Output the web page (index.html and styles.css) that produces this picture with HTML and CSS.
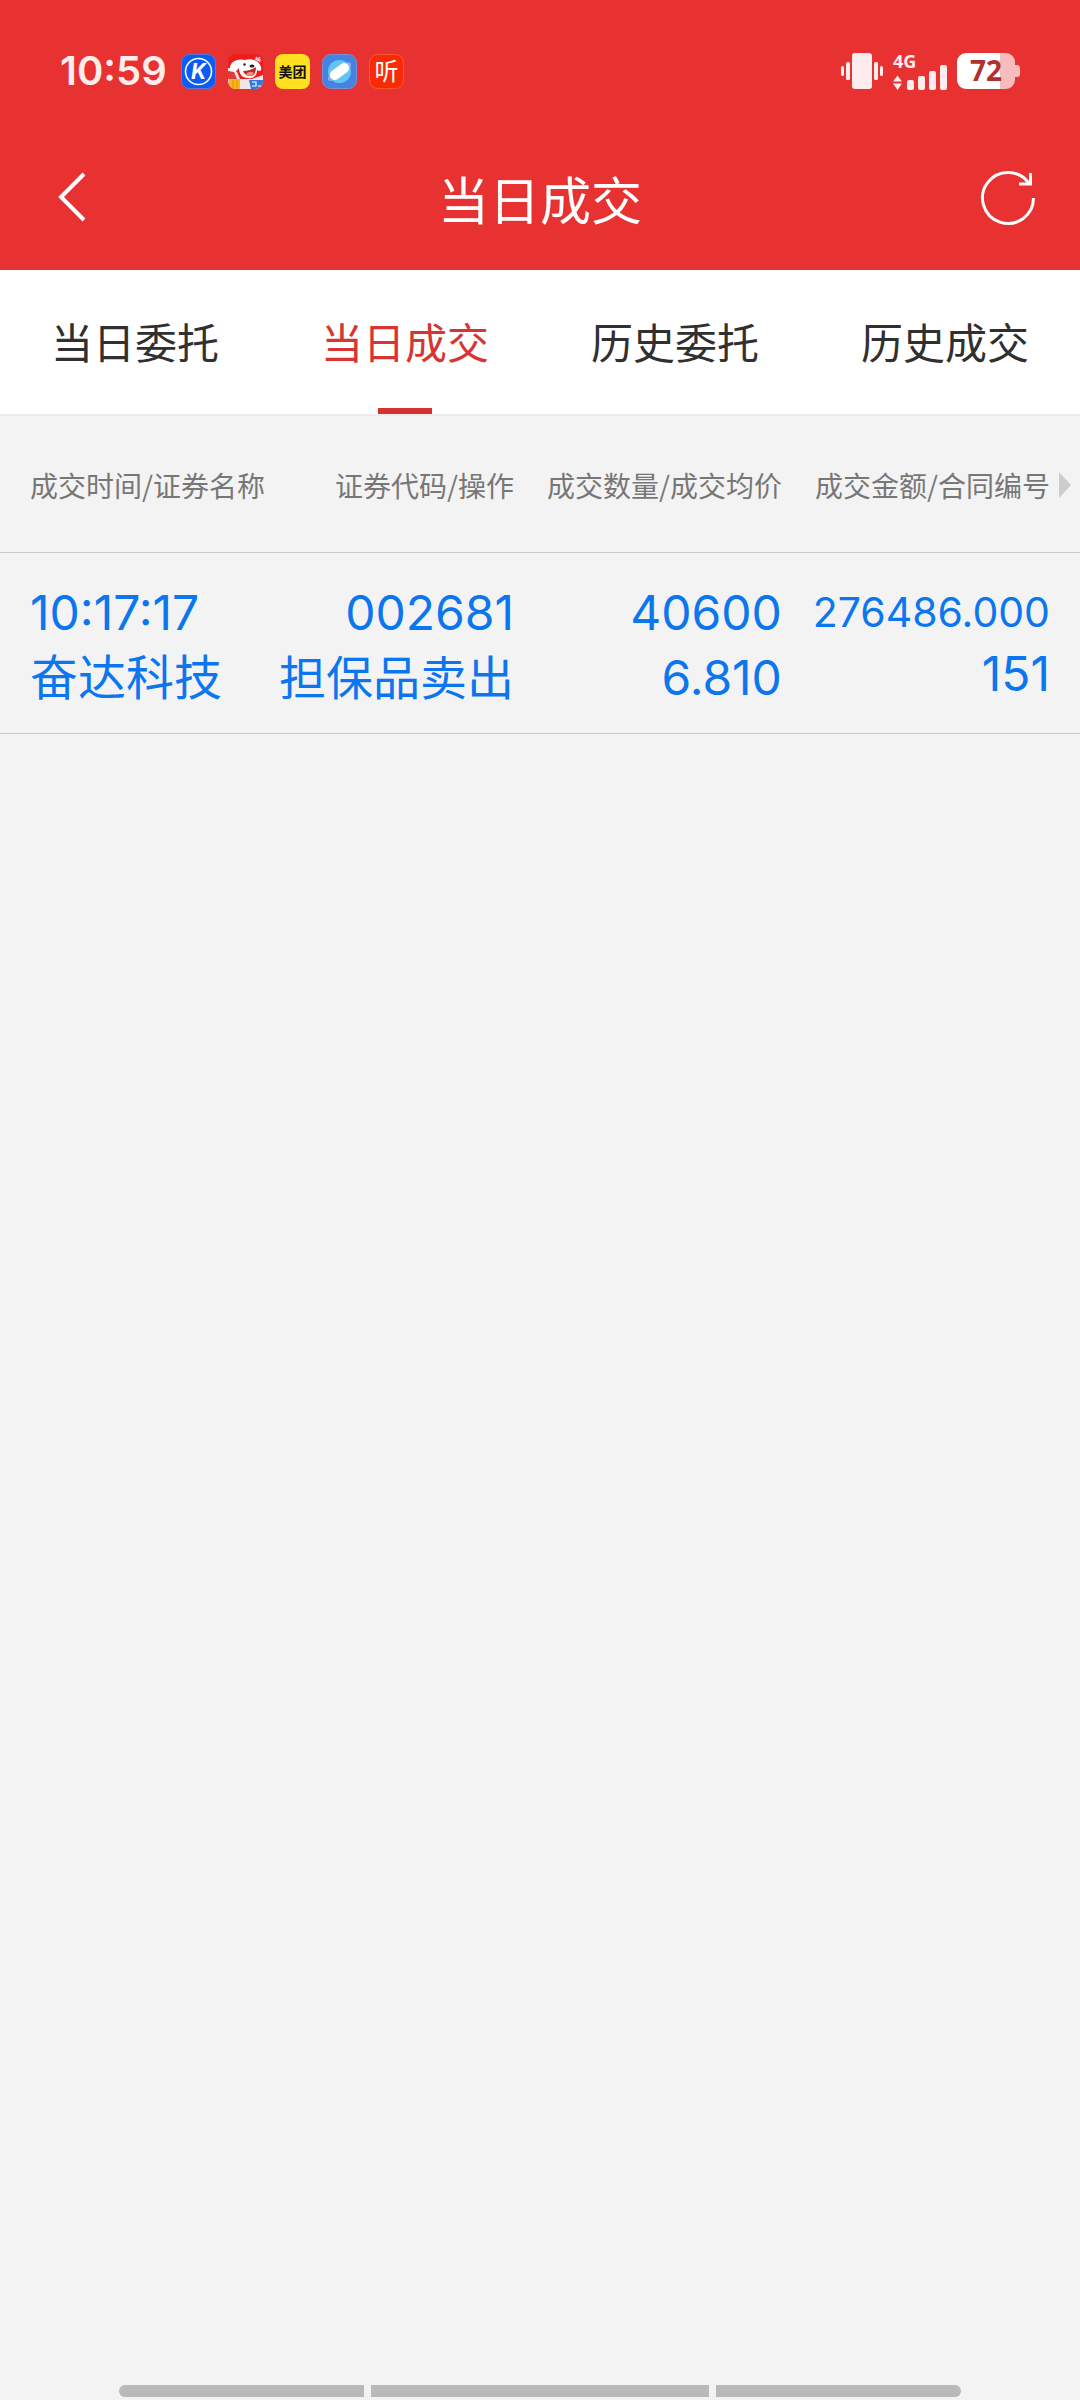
FILE: index.html
```html
<!DOCTYPE html>
<html lang="zh-CN">
<head>
<meta charset="utf-8">
<meta name="viewport" content="width=device-width, initial-scale=1">
<title>当日成交</title>
<link rel="stylesheet" href="styles.css">
</head>
<body>
<div class="app">
  <header class="top">
    <div class="status">
      <div class="status-side">
        <span class="clock">10:59</span>
        <div class="notices">
          <svg class="notice" viewBox="0 0 35 35" aria-hidden="true">
            <rect x=".5" y=".5" width="34" height="34" rx="8" fill="#0a5cf5" stroke="#5a78d8"/>
            <circle cx="17.500" cy="17.500" r="13" fill="none" stroke="#fff" stroke-width="1.600"/>
            <text class="glyph-k" x="17.500" y="25" text-anchor="middle">K</text>
          </svg>
          <svg class="notice" viewBox="0 0 35 35" aria-hidden="true">
            <clipPath id="tile"><rect width="35" height="35" rx="8"/></clipPath>
            <g clip-path="url(#tile)">
              <rect width="35" height="35" fill="#ee1c1c"/>
              <path d="M0 14Q5 14 9 18L12 25H24L35 21V35H0Z" fill="#f4e4e4"/>
              <path d="M0 17l6 1 3 7H0Z" fill="#e23a3a"/>
              <path d="M2 13C3 7 10 4 17 6C23 4 31 6 33 13C34 17 32 18 29 16C29 22 25 25 20 24C14 24 11 20 11 14C8 19 1 19 2 13Z" fill="#fff"/>
              <path d="M15 17Q22 17 28 13Q28 22 22 22Q17 22 15 17Z" fill="#c92222"/>
              <path d="M18 20Q22 16 26 19Q24 22 22 22Q19 22 18 20Z" fill="#f58a80"/>
              <ellipse cx="24" cy="12" rx="2.500" ry="1.500" fill="#222"/>
              <circle cx="16.500" cy="10.500" r="1.200" fill="#222"/>
              <path d="M28 3l4 5M32 3l-4 5M27 5l6 1" stroke="#e8c6d0" stroke-width="1.500"/>
              <path d="M1 25h11v10H1Z" fill="#fbb51c"/>
              <path d="M5 26v8M9 26v8" stroke="#e08f10"/>
              <path d="M21 26h14v9H23Z" fill="#2f78e0"/>
              <path d="M24 28h4v4h-4M30 32h4" stroke="#fff" stroke-width="1.200" fill="none"/>
            </g>
          </svg>
          <svg class="notice" viewBox="0 0 35 35" aria-hidden="true">
            <rect width="35" height="35" rx="8" fill="#ffe01e"/>
            <text class="glyph-mt" x="17.500" y="22.500" text-anchor="middle">美团</text>
          </svg>
          <svg class="notice" viewBox="0 0 35 35" aria-hidden="true">
            <rect x=".5" y=".5" width="34" height="34" rx="8" fill="#4583e0" stroke="#7b8fd4"/>
            <circle cx="17.500" cy="17.500" r="11.500" fill="#62c4f5"/>
            <ellipse cx="17.500" cy="17.500" rx="14" ry="5" fill="#86b0ee" transform="rotate(-37 17.500 17.500)"/>
            <rect x="6.500" y="12.500" width="22" height="10" rx="5" fill="#fff" transform="rotate(-37 17.500 17.500)"/>
          </svg>
          <svg class="notice" viewBox="0 0 35 35" aria-hidden="true">
            <rect x=".5" y=".5" width="34" height="34" rx="8" fill="#f92a06" stroke="#fb5a30"/>
            <text class="glyph-ting" x="17.500" y="26" text-anchor="middle">听</text>
          </svg>
        </div>
      </div>
      <div class="status-side">
        <svg class="vibrate" viewBox="0 0 42 36" aria-hidden="true">
          <g fill="#ffecec">
            <rect x="11" width="20" height="36" rx="3"/>
            <rect x="5" y="9" width="4" height="18" rx="1.500"/>
            <rect x="33" y="9" width="4" height="18" rx="1.500"/>
            <rect y="13" width="3" height="10" rx="1.500"/>
            <rect x="39" y="13" width="3" height="10" rx="1.500"/>
          </g>
        </svg>
        <svg class="signal" viewBox="0 0 54 36" aria-hidden="true">
          <g fill="#ffecec">
            <text class="glyph-net" x="0" y="15">4G</text>
            <path d="M4.500 22.500L9 28.500H0ZM4.500 37L0 30.500H9Z"/>
            <rect x="14" y="27" width="7" height="10" rx="2"/>
            <rect x="25" y="23" width="7" height="14" rx="2"/>
            <rect x="36" y="18" width="7" height="19" rx="2"/>
            <rect x="47" y="12" width="7" height="25" rx="2"/>
          </g>
        </svg>
        <svg class="battery" viewBox="0 0 63 36" aria-label="72">
          <path d="M43 0H49A9 9 0 0 1 58 9V12H60Q63 12 63 15V21Q63 24 60 24H58V27A9 9 0 0 1 49 36H43Z" fill="#f7bcbc"/>
          <path d="M9 0H43V36H9A9 9 0 0 1 0 27V9A9 9 0 0 1 9 0Z" fill="#fff"/>
          <text class="glyph-pct" x="29" y="28" text-anchor="middle">72</text>
        </svg>
      </div>
    </div>
    <div class="bar">
      <button class="icon-btn" type="button" aria-label="返回">
        <svg class="back" viewBox="0 0 30 52" aria-hidden="true"><path d="M27 2L4 25L27 48" fill="none" stroke="#fff" stroke-width="4"/></svg>
      </button>
      <h1 class="title">当日成交</h1>
      <button class="icon-btn refresh-btn" type="button" aria-label="刷新">
        <svg class="refresh" viewBox="0 0 56 56" aria-hidden="true"><g fill="none" stroke="#fff" stroke-width="3"><path d="M53.500 28A25.500 25.500 0 1 1 49 13.500"/><path d="M50.500 3V14H39"/></g></svg>
      </button>
    </div>
  </header>
  <nav class="tabs">
    <a class="tab" href="#">当日委托</a>
    <a class="tab tab-on" href="#" aria-current="page">当日成交</a>
    <a class="tab" href="#">历史委托</a>
    <a class="tab" href="#">历史成交</a>
  </nav>
  <main>
    <table class="deals">
      <thead>
        <tr>
          <th class="first">成交时间/证券名称</th>
          <th>证券代码/操作</th>
          <th>成交数量/成交均价</th>
          <th class="last">成交金额/合同编号<span class="more"></span></th>
        </tr>
      </thead>
      <tbody>
        <tr>
          <td class="first"><div>10:17:17</div><div>奋达科技</div></td>
          <td><div>002681</div><div class="name">担保品卖出</div></td>
          <td><div>40600</div><div>6.810</div></td>
          <td class="last"><div class="amount">276486.000</div><div>151</div></td>
        </tr>
      </tbody>
    </table>
  </main>
  <footer class="gesture"><span></span><span></span><span></span></footer>
</div>
</body>
</html>
```
FILE: styles.css
```css
* { box-sizing: border-box; }

body {
  margin: 0;
  background: #f3f3f3;
  font-family: Inter, "Noto Sans CJK SC", sans-serif;
}

.app {
  display: flex;
  flex-direction: column;
  min-height: 100vh;
}

/* Header */
.top {
  background: #e83131;
  color: #fff;
}

.status {
  display: flex;
  justify-content: space-between;
  align-items: center;
  height: 142px;
  padding: 0 60px;
}

.status-side {
  display: flex;
  align-items: center;
  gap: 10px;
}

.clock {
  width: 111px;
  font-size: 40px;
  line-height: 48px;
  font-weight: 600;
  color: #ffecec;
}

.notices {
  display: flex;
  gap: 12px;
}

.notice {
  width: 35px;
  height: 35px;
  overflow: visible;
}

.vibrate { width: 42px; height: 36px; }
.signal { width: 54px; height: 36px; overflow: visible; }
.battery { width: 63px; height: 36px; overflow: visible; }

.glyph-k { font: italic 700 21px Inter, sans-serif; fill: #fff; }
.glyph-mt { font: 700 14px "Noto Sans CJK SC", sans-serif; fill: #111; }
.glyph-ting { font: 400 24px "Noto Sans CJK SC", sans-serif; fill: #fff; }
.glyph-net { font: 700 18px "Open Sans", sans-serif; }
.glyph-pct { font: 700 28px "Open Sans", sans-serif; fill: #b03030; }

.bar {
  display: flex;
  justify-content: space-between;
  align-items: center;
  height: 128px;
  padding: 0 44px 16px 57px;
}

.icon-btn {
  display: flex;
  width: 70px;
  padding: 0;
  border: 0;
  background: none;
}

.refresh-btn {
  width: 83px;
  justify-content: flex-end;
}

.back { width: 30px; height: 52px; }
.refresh { width: 56px; height: 56px; }

.title {
  margin: 0;
  padding-top: 8px;
  font-size: 51px;
  line-height: 60px;
  font-weight: 400;
}

/* Tabs */
.tabs {
  display: grid;
  grid-template-columns: repeat(4, 1fr);
  background: #fff;
  border-bottom: 2px solid #ececec;
}

.tab {
  display: flex;
  flex-direction: column;
  align-items: center;
  height: 144px;
  padding-top: 44px;
  font-size: 42px;
  line-height: 60px;
  color: #303030;
  text-decoration: none;
}

.tab-on { color: #d83434; }

.tab-on::after {
  content: "";
  width: 54px;
  height: 6px;
  margin-top: auto;
  background: #d83030;
}

/* Deals */
.deals {
  width: 100%;
  table-layout: fixed;
  border-collapse: collapse;
  text-align: right;
}

.deals th,
.deals td {
  width: 24.8%;
  padding: 0;
  border-bottom: 1px solid #c8c8c8;
  white-space: nowrap;
}

.deals th {
  height: 136px;
  padding-top: 2px;
  font-family: "Noto Sans CJK SC", sans-serif;
  font-size: 28px;
  line-height: 40px;
  font-weight: 400;
  color: #777;
}

.deals td {
  height: 181px;
  padding-top: 27px;
  font-size: 48px;
  line-height: 65px;
  color: #0c76ee;
  vertical-align: top;
}

.deals .first {
  width: 22.8%;
  padding-left: 30px;
  text-align: left;
}

.deals .last {
  position: relative;
  width: auto;
  padding-right: 30px;
}

.deals td.last {
  padding-top: 29px;
  line-height: 61px;
}

.deals .name { font-size: 47px; }
.deals .amount { font-size: 41px; }

.more {
  position: absolute;
  top: 56px;
  right: 9px;
  border: solid transparent;
  border-width: 13px 0 13px 12px;
  border-left-color: #ccc;
}

/* Gesture hints */
.gesture {
  display: grid;
  grid-template-columns: 245fr 338fr 245fr;
  gap: 7px;
  margin-top: auto;
  padding: 0 11% 3px;
}

.gesture span {
  height: 12px;
  background: #b9b9b9;
}

.gesture span:first-child { border-radius: 6px 0 0 6px; }
.gesture span:last-child { border-radius: 0 6px 6px 0; }
```
